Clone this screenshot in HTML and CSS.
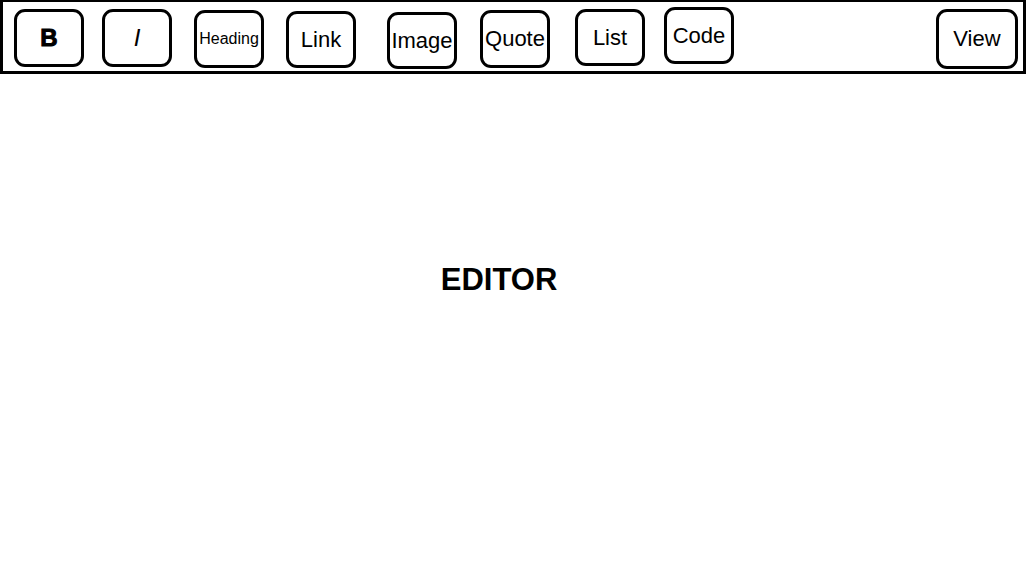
FILE: index.html
```html
<!DOCTYPE html>
<html lang="en">
<head>
  <meta charset="UTF-8">
  <meta name="viewport" content="width=device-width, initial-scale=1.0">
  <title>Editor</title>
  <link rel="stylesheet" href="styles.css">
</head>
<body>
  <div class="toolbar">
    <button class="tool tool-bold">B</button>
    <button class="tool tool-italic">I</button>
    <button class="tool tool-heading">Heading</button>
    <button class="tool tool-link">Link</button>
    <button class="tool tool-image">Image</button>
    <button class="tool tool-quote">Quote</button>
    <button class="tool tool-list">List</button>
    <button class="tool tool-code">Code</button>
    <button class="tool tool-view">View</button>
  </div>

  <div class="editor">
    <h1 class="editor-title">EDITOR</h1>
  </div>
</body>
</html>
```

FILE: styles.css
```css
body, html {
  margin: 0;
  padding: 0;
  height: 100%;
  background-color: #fff;
  font-family: "Liberation Sans", Arial, sans-serif;
  color: #000;
}

body {
  display: flex;
  flex-direction: column;
}

.toolbar {
  box-sizing: border-box;
  height: 74px;
  display: flex;
  align-items: flex-start;
  padding: 7px 5px 0 11px;
  border: 3px solid #000;
  border-top-width: 2px;
}

.tool {
  box-sizing: border-box;
  width: 70px;
  height: 58px;
  padding: 0;
  display: flex;
  justify-content: center;
  align-items: center;
  background: #fff;
  border: 3px solid #000;
  border-radius: 11px;
  font-family: inherit;
  font-size: 22px;
  color: #000;
}

.tool-bold {
  font-size: 24px;
  font-weight: bold;
  -webkit-text-stroke: 1px #000;
}

.tool-italic {
  margin-left: 18px;
  font-size: 24px;
  font-style: italic;
}

.tool-heading {
  margin: 1px 0 0 22px;
  font-size: 16px;
}

.tool-link {
  margin: 2px 0 0 22px;
  height: 57px;
}

.tool-image {
  margin: 3px 0 0 31px;
  height: 57px;
}

.tool-quote {
  margin: 1px 0 0 23px;
}

.tool-list {
  margin-left: 25px;
  height: 57px;
}

.tool-code {
  margin: -2px 0 0 19px;
  height: 57px;
}

.tool-view {
  margin-left: auto;
  width: 82px;
  height: 60px;
}

.editor {
  flex: 1;
  display: flex;
  justify-content: center;
  align-items: center;
  padding: 0 28px 76px 0;
}

.editor-title {
  margin: 0;
  font-size: 31px;
  font-weight: bold;
}
```
